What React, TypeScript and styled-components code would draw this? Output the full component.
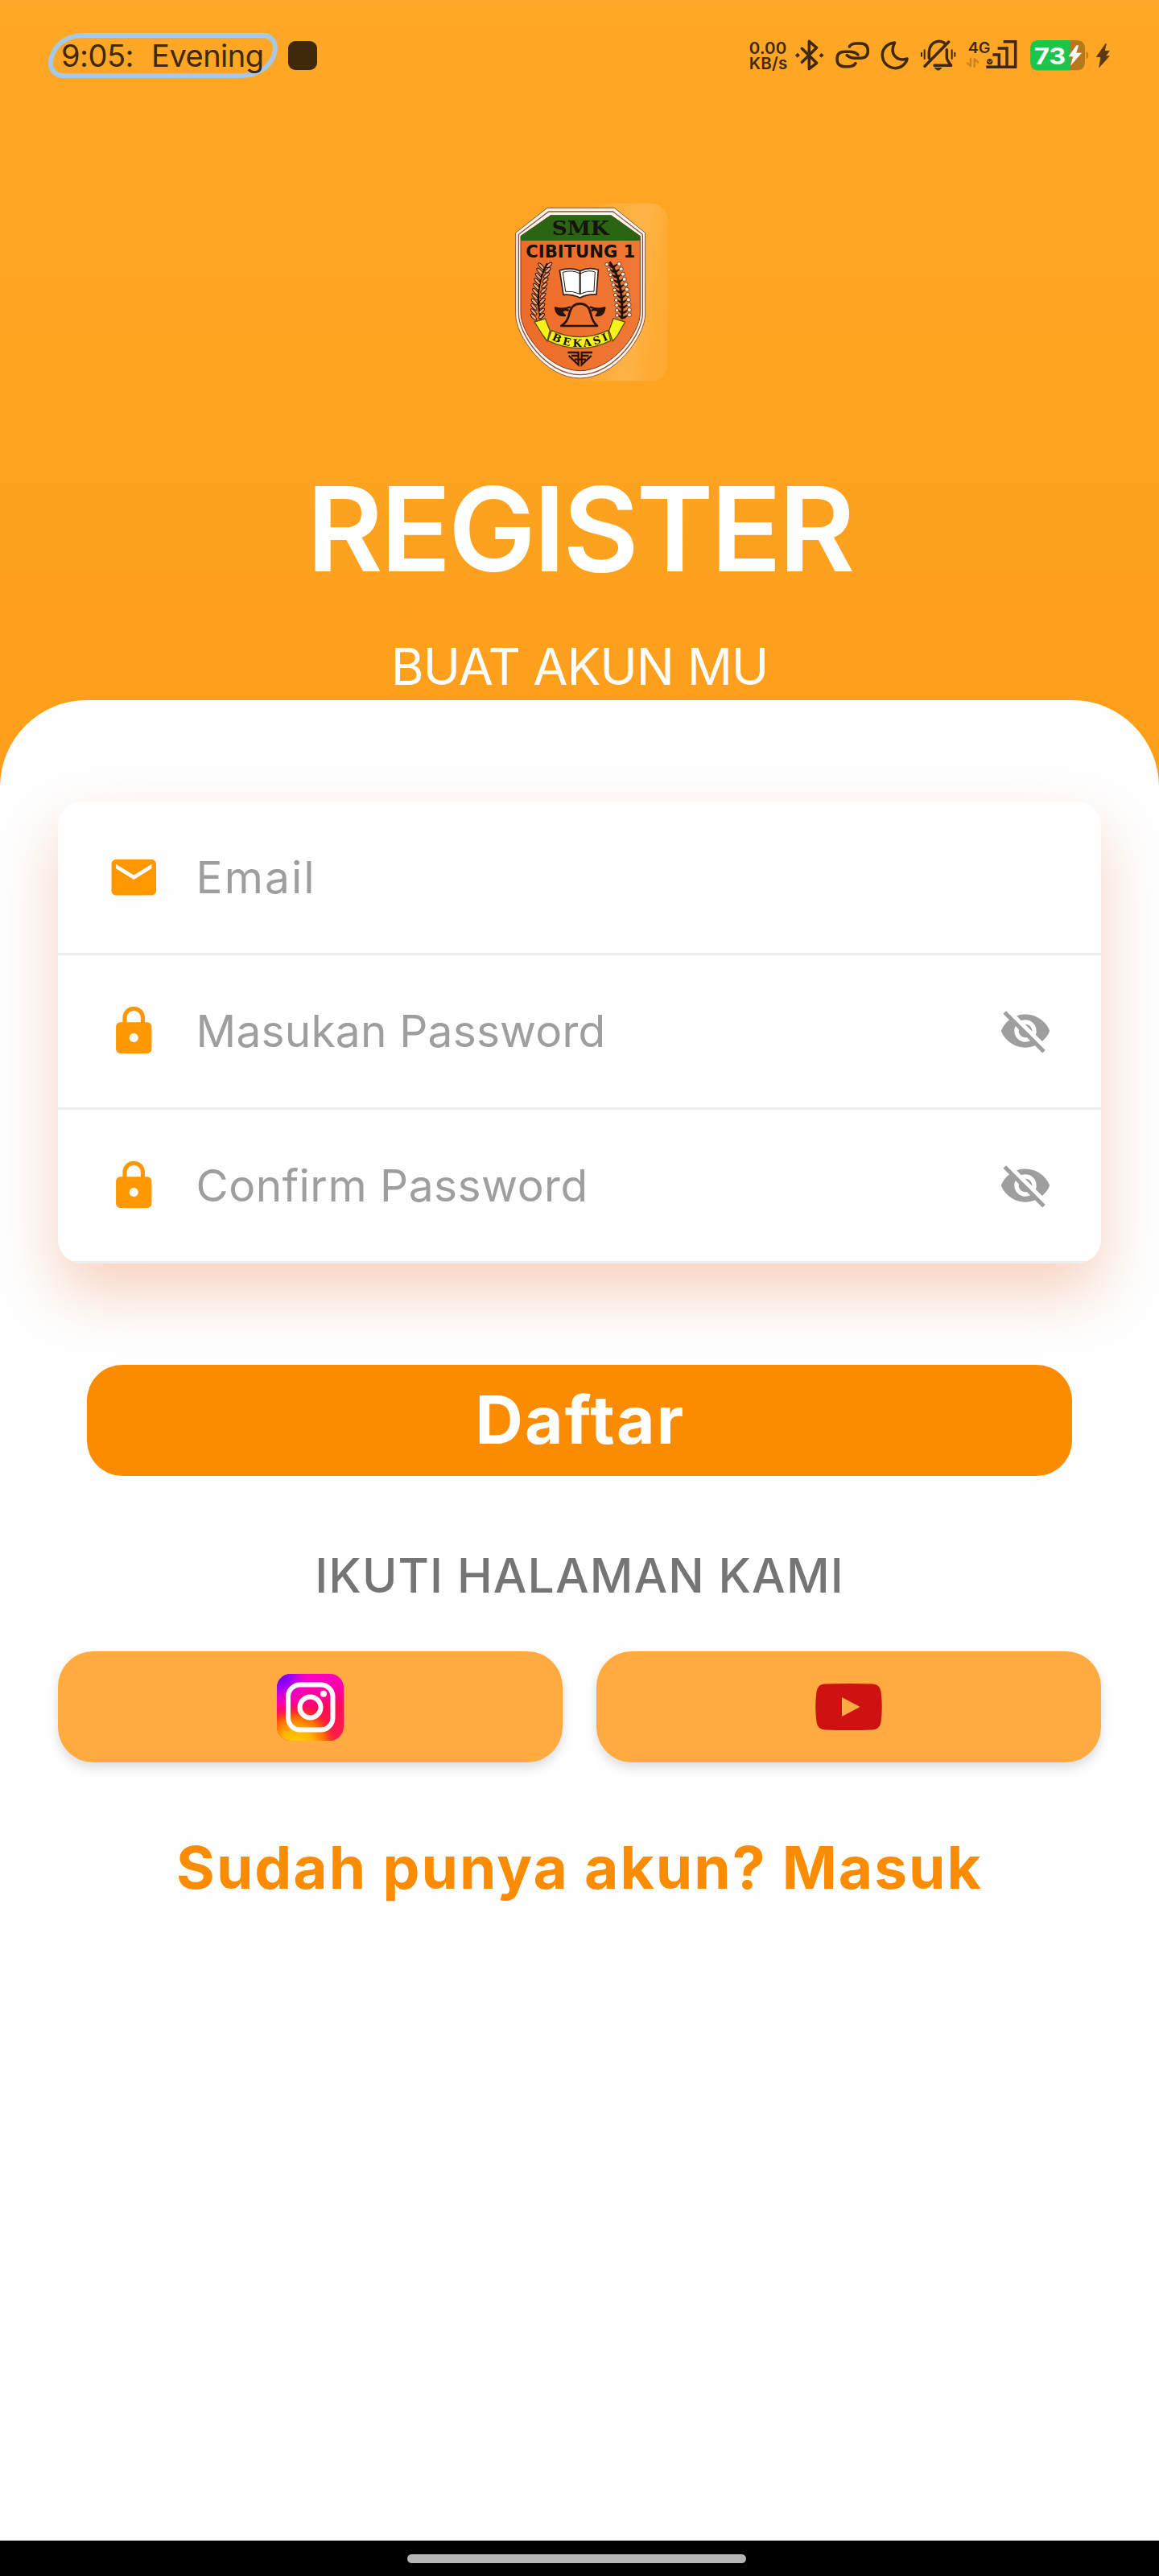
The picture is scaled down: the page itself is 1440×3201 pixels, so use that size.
import React, { useId } from 'react';
import styled, { createGlobalStyle } from 'styled-components';
import { MdEmail, MdLock, MdVisibilityOff } from 'react-icons/md';

const INK = '#40280a';

const GlobalStyle = createGlobalStyle`
  body { margin: 0; }
  *, *::before, *::after { box-sizing: border-box; }
  button { font: inherit; border: 0; padding: 0; cursor: pointer; }
  svg { display: block; flex: none; }
`;

const Screen = styled.main`
  width: 1440px;
  height: 3201px;
  display: flex;
  flex-direction: column;
  overflow: hidden;
  font-family: Inter, 'Open Sans', sans-serif;
  background: linear-gradient(to bottom, #ffa726, #fb8c00);
`;

/* ---------- status bar ---------- */

const StatusBar = styled.div`
  height: 138px;
  flex: none;
  display: flex;
  align-items: center;
  padding: 0 61px 0 60px;
  color: ${INK};
`;

const ClockPill = styled.div`
  width: 285px;
  height: 56px;
  display: flex;
  align-items: center;
  gap: 22px;
  padding-left: 10px;
  border: 6px solid #a5c9ea;
  border-radius: 42px 18px 44px 18px / 38px 18px 38px 18px;
  font-size: 38px;
  line-height: 44px;
  letter-spacing: -0.5px;
  white-space: nowrap;
`;

const RecordDot = styled.div`
  width: 36px;
  height: 36px;
  margin-left: 13px;
  border-radius: 9px;
  background: ${INK};
`;

const StatusIcons = styled.div`
  margin-left: auto;
  display: flex;
  align-items: center;
`;

const NetSpeed = styled.div`
  width: 57px;
  display: flex;
  flex-direction: column;
  font-size: 20.5px;
  font-weight: 600;
  line-height: 19.5px;
  letter-spacing: 0.2px;
`;

const StatusGlyph = styled.svg<{ $gap?: number }>`
  margin-right: ${(p) => p.$gap ?? 0}px;
  overflow: visible;
  fill: none;
  stroke: ${INK};
  stroke-width: 10.5;
  stroke-linecap: round;
  stroke-linejoin: round;
`;

type GlyphProps = { x: number; w: number; gap?: number; label: string; children: React.ReactNode };

/* Status glyphs share one 125-unit tall band, three units to a pixel. */
const Glyph = ({ x, w, gap, label, children }: GlyphProps) => (
  <StatusGlyph $gap={gap} width={w / 3} height={125 / 3} viewBox={`${x} 85 ${w} 125`} aria-label={label}>
    {children}
  </StatusGlyph>
);

/* ---------- header ---------- */

const Header = styled.header`
  height: 732px;
  flex: none;
  display: flex;
  flex-direction: column;
  align-items: center;
  color: #fff;
`;

const CrestBox = styled.div`
  margin-top: 102px;
  margin-left: 20px;
`;

const Title = styled.h1`
  margin: 97px 0 0;
  font-size: 145.5px;
  font-weight: 600;
  line-height: 160px;
  letter-spacing: -3.5px;
`;

const Subtitle = styled.p`
  margin: 59px 0 0;
  font-size: 62.6px;
  font-weight: 400;
  line-height: 64px;
  letter-spacing: -1.1px;
`;

/* ---------- form sheet ---------- */

const Sheet = styled.section`
  flex: 1;
  display: flex;
  flex-direction: column;
  align-items: center;
  padding: 126px 72px 0;
  border-radius: 108px 108px 0 0;
  background: #fefefe;
`;

const Card = styled.form`
  width: 100%;
  height: 574px;
  flex: none;
  display: flex;
  flex-direction: column;
  overflow: hidden;
  border-radius: 30px;
  background: #fefefe;
  box-shadow: 0 36px 75px rgba(225, 95, 27, 0.28);
`;

const Field = styled.label`
  flex: 1;
  display: flex;
  align-items: center;
  padding: 0 61px 0 61px;
  border-bottom: 3.6px solid #eeeeee;
  color: #ff9800;
`;

const Placeholder = styled.span<{ $tracking: number }>`
  flex: 1;
  margin-left: 44px;
  color: #9e9e9e;
  font-size: 55px;
  font-weight: 400;
  line-height: 66px;
  letter-spacing: ${(p) => p.$tracking}px;
`;

const Reveal = styled.span`
  color: #9e9e9e;
`;

const SubmitButton = styled.button`
  && {
    width: 1224px;
    height: 138px;
    flex: none;
    margin-top: 126px;
    padding-left: 2px;
    border-radius: 44px;
    background: #fb8c00;
    color: #fff;
    font-size: 82px;
    font-weight: 700;
    line-height: 90px;
    letter-spacing: 2.2px;
  }
`;

const FollowCaption = styled.p`
  margin: 94px 0 0;
  color: #757575;
  font-size: 58.8px;
  font-weight: 500;
  line-height: 60px;
  letter-spacing: 1.1px;
`;

const SocialRow = styled.div`
  width: 100%;
  margin-top: 64px;
  display: grid;
  grid-template-columns: 1fr 1fr;
  gap: 42px;
`;

const SocialButton = styled.button`
  height: 138px;
  display: flex;
  align-items: center;
  justify-content: center;
  border-radius: 44px;
  background: #ffab40;
  box-shadow: 0 8px 14px rgba(0, 0, 0, 0.1), 0 2px 12px rgba(0, 0, 0, 0.04);
`;

const LoginLink = styled.p`
  margin: 86px 0 0;
  color: #fb8c00;
  font-size: 73px;
  font-weight: 650;
  line-height: 90px;
  letter-spacing: 2px;
  white-space: nowrap;
`;

/* ---------- system navigation ---------- */

const NavBar = styled.div`
  height: 44px;
  flex: none;
  padding: 17px 0 0 506px;
  background: #000;
`;

const NavHandle = styled.div`
  width: 421px;
  height: 11px;
  border-radius: 6px;
  background: #b4b4b4;
`;

const leafRows = Array.from({ length: 11 }, (_, i) => i);

const leftStem = (i: number) => ({ x: 146 + Math.pow((10 - i) / 10, 2) * 28, y: 272 + i * 19 });
const rightStem = (i: number) => ({ x: 462 - Math.pow((10 - i) / 10, 2) * 38, y: 266 + i * 19 });

function Crest() {
  const id = useId();
  return (
    <svg width={220} height={240} viewBox="0 0 660 720" aria-label="SMK Cibitung 1 Bekasi">
      <defs>
        <linearGradient id={`${id}glow`} x1="0" x2="1" y1="0" y2="0.12">
          <stop offset="0.45" stopColor="#fff" stopOpacity="0" />
          <stop offset="0.85" stopColor="#fff" stopOpacity="0.17" />
          <stop offset="1" stopColor="#fff" stopOpacity="0.08" />
        </linearGradient>
        <linearGradient id={`${id}body`} x1="0" x2="1" y1="0" y2="0">
          <stop offset="0" stopColor="#ee6c2a" />
          <stop offset="1" stopColor="#ef7834" />
        </linearGradient>
        <path id={`${id}arc`} d="M190 543 Q302 605 418 540" />
      </defs>
      <rect x="20" y="38" width="608" height="662" rx="60" fill={`url(#${id}glow)`} />
      <path d="M180 55H430L545 148V452C545 530 434 690 302 690C170 690 62 530 62 452V148Z" fill="#fff6ee" stroke="#8b5240" strokeWidth="3" />
      <path d="M185 69H425L535 154V450C535 525 428 677 302 677C176 677 73 525 73 450V154Z" fill="none" stroke="#8b5240" strokeWidth="4" />
      <path d="M192 83H418L526 160V448C526 520 422 662 302 662C182 662 81 520 81 448V160Z" fill={`url(#${id}body)`} stroke="#7c3a22" strokeWidth="3" />
      <path d="M192 83H418L526 160V177H81V160Z" fill="#2b6412" />
      <g fill="#15130c" fontWeight="700">
        <text x="197" y="155" fontFamily="'DejaVu Serif', serif" fontSize="70" textLength="213" lengthAdjust="spacingAndGlyphs">SMK</text>
        <text x="100" y="239" fontFamily="'DejaVu Sans', sans-serif" fontSize="61" textLength="408" lengthAdjust="spacingAndGlyphs">CIBITUNG 1</text>
      </g>

      {/* rice ear on the left, cotton branch on the right */}
      <path d="M180 262C140 330 140 400 156 470" fill="none" stroke="#1c130d" strokeWidth="7" />
      {leafRows.map((i) => {
        const { x, y } = leftStem(i);
        return (
          <g key={i} stroke="#1c130d" strokeWidth="3">
            <ellipse cx={x - 17} cy={y} rx="15" ry="5.5" transform={`rotate(48 ${x - 17} ${y})`} fill="#f4a57c" />
            <ellipse cx={x + 13} cy={y - 4} rx="13" ry="5.5" transform={`rotate(-42 ${x + 13} ${y - 4})`} fill="#f4a57c" />
          </g>
        );
      })}
      <path d="M412 256Q466 330 458 470" fill="none" stroke="#1c130d" strokeWidth="9" />
      {leafRows.map((i) => {
        const { x, y } = rightStem(i);
        return (
          <g key={i}>
            <path d={`M${x - 20} ${y - 2}L${x} ${y + 6}L${x + 22} ${y - 4}L${x + 7} ${y + 11}H${x - 7}Z`} fill="#1c130d" stroke="#1c130d" strokeWidth="2" />
            <circle cx={x - 22} cy={y} r="6.5" fill="#ffe3d0" stroke="#1c130d" strokeWidth="2" />
            <circle cx={x + 24} cy={y - 2} r="7.5" fill="#ffe3d0" stroke="#1c130d" strokeWidth="2" />
          </g>
        );
      })}

      {/* open book */}
      <path d="M226 288Q268 274 302 290Q336 274 370 286L363 378Q330 376 302 390Q270 376 240 379Z" fill="#fff" stroke="#3a1d12" strokeWidth="5" strokeLinejoin="round" />
      <path d="M238 295Q272 284 302 300Q334 284 358 294L354 366Q328 364 302 376Q274 364 248 367Z" fill="#fff" stroke="#1c130d" strokeWidth="3" />
      <path d="M302 292V376" stroke="#1c130d" strokeWidth="6" />

      {/* anvil and horns */}
      <path d="M232 495Q256 480 262 450Q270 412 302 412Q334 412 342 450Q348 480 366 495Z" fill="none" stroke="#2a130b" strokeWidth="8" strokeLinejoin="round" />
      <path d="M266 424Q238 436 210 427Q214 460 246 456Q232 444 236 438Q250 432 260 438M338 424Q366 436 394 427Q390 460 362 456Q374 444 368 438Q354 432 344 438" fill="none" stroke="#2a130b" strokeWidth="7" strokeLinejoin="round" />
      <path d="M210 427L236 434L244 456Q216 456 210 427ZM394 427L368 434L362 456Q388 456 394 427Z" fill="#2a130b" />

      {/* ribbon */}
      <path d="M132 480L172 468L190 512L180 552L162 528Z M470 480L426 467L410 512L424 552L442 530Z" fill="#f5f21a" stroke="#5b4c10" strokeWidth="4" strokeLinejoin="round" />
      <path d="M196 512Q302 560 406 512L416 550Q302 606 182 550Z" fill="#f5f21a" stroke="#5b4c10" strokeWidth="4" strokeLinejoin="round" />
      <text fill="#15130c" fontFamily="'DejaVu Serif', serif" fontWeight="700" fontSize="39">
        <textPath href={`#${id}arc`} startOffset="6" textLength="222" lengthAdjust="spacing">BEKASI</textPath>
      </text>
      <path d="M256 594H296V640L260 606M348 594H308V640L344 606M270 606H296M308 606H334M282 620H324" fill="none" stroke="#2a130b" strokeWidth="7" />
    </svg>
  );
}

function InstagramLogo() {
  const id = useId();
  return (
    <svg width={83} height={83} viewBox="0 0 83 83" aria-label="Instagram">
      <defs>
        <linearGradient id={`${id}base`} x1="0.3" y1="0" x2="0.5" y2="1">
          <stop offset="0" stopColor="#fc00d0" />
          <stop offset="0.35" stopColor="#ff00a0" />
          <stop offset="0.6" stopColor="#ff0f50" />
          <stop offset="1" stopColor="#ff1a50" />
        </linearGradient>
        <radialGradient id={`${id}violet`} cx="0.02" cy="0" r="0.5">
          <stop offset="0" stopColor="#5a00ff" />
          <stop offset="0.4" stopColor="#9a00f5" />
          <stop offset="1" stopColor="#f000d8" stopOpacity="0" />
        </radialGradient>
        <radialGradient id={`${id}gold`} cx="0.3" cy="1.08" r="0.62">
          <stop offset="0" stopColor="#ffd000" />
          <stop offset="0.4" stopColor="#ffb400" />
          <stop offset="0.7" stopColor="#ff6a00" />
          <stop offset="1" stopColor="#ff2020" stopOpacity="0" />
        </radialGradient>
      </defs>
      <rect width="83" height="83" rx="17" fill={`url(#${id}base)`} />
      <rect width="83" height="83" rx="17" fill={`url(#${id}violet)`} />
      <rect width="83" height="83" rx="17" fill={`url(#${id}gold)`} />
      <g fill="none" stroke="#fff" strokeWidth="6">
        <rect x="14" y="13.5" width="55.5" height="56" rx="15" />
        <circle cx="41.5" cy="41.5" r="13" />
      </g>
      <circle cx="58" cy="24.8" r="4" fill="#fff" />
    </svg>
  );
}

const YoutubeLogo = () => (
  <svg width={83} height={58} viewBox="0 0 83 58" aria-label="YouTube">
    <path
      fill="#cd1211"
      fillRule="evenodd"
      d="M12 .6Q41.500 -.6 71 .6Q80 1 81.500 10Q84 29 81.500 48Q80 57 71 57.400Q41.500 58.600 12 57.400Q3 57 1.500 48Q-1 29 1.500 10Q3 1 12 .6ZM33 17V41L55.500 29Z"
    />
  </svg>
);

type FieldSpec = { icon: React.ReactNode; label: string; tracking: number; secret: boolean };

const fields: FieldSpec[] = [
  { icon: <MdEmail size={66.5} />, label: 'Email', tracking: 2.1, secret: false },
  { icon: <MdLock size={66.5} />, label: 'Masukan Password', tracking: 0.2, secret: true },
  { icon: <MdLock size={66.5} />, label: 'Confirm Password', tracking: 0.5, secret: true },
];

export default function App() {
  return (
    <Screen>
      <GlobalStyle />
      <StatusBar>
        <ClockPill>
          <span>9:05:</span>
          <span>Evening</span>
        </ClockPill>
        <RecordDot />
        <StatusIcons>
          <NetSpeed>
            <span>0.00</span>
            <span>KB/s</span>
          </NetSpeed>
          <Glyph x={265} w={110} gap={13.3} label="Bluetooth">
            <path d="M290 122L345 176L317 198V95L345 119L290 173" />
            <path d="M267 147L274 140L281 147L274 154ZM356 147L363 140L370 147L363 154Z" fill={INK} strokeWidth="3" />
          </Glyph>
          <Glyph x={415} w={128} gap={14} label="Link">
            <path d="M467 115Q474 103 492 103H508Q536 103 536 131Q536 158 508 158H488Q470 158 458 147" />
            <path d="M490 177Q483 189 465 189H449Q421 189 421 161Q421 134 449 134H469Q487 134 499 145" />
          </Glyph>
          <Glyph x={585} w={105} gap={14} label="Do not disturb">
            <path d="M638 100C603 104 590 130 592 150C596 192 642 206 668 185C678 177 683 168 684 160C646 172 616 142 638 100Z" />
          </Glyph>
          <Glyph x={732} w={135} gap={12.7} label="Vibrate">
            <path d="M839 97L750 188M766 158V135C768 90 814 88 825 104M832 126V158Q834 166 848 185H786" />
            <path d="M787 194H813Q808 203 800 203Q792 203 787 194Z" fill={INK} strokeWidth="2" />
            <path d="M738 138V150M749 128V160M851 128V160M862 138V150" strokeWidth="6" />
          </Glyph>
          <Glyph x={905} w={188} gap={16.3} label="4G signal">
            <text x="910" y="138" fill={INK} stroke="none" fontFamily="Inter, sans-serif" fontWeight="600" fontSize="55" textLength="83" lengthAdjust="spacingAndGlyphs">4G</text>
            <g strokeLinecap="butt" strokeLinejoin="miter">
              <path d="M1042 96H1087V186M1021 121H1055V186M1002 145H1026V186M978 191H1092" />
            </g>
            <circle cx="991" cy="171" r="10" fill={INK} strokeWidth="2" />
            <path d="M985 168L992 174L997 168" stroke="#ffa625" strokeWidth="3" />
            <path d="M920 159V187L908 176M934 189V161L948 174" stroke="#c98420" strokeWidth="7" />
          </Glyph>
          <Glyph x={1142} w={222} gap={7} label="Battery 73 percent">
            <path d="M1175 91H1314Q1346 91 1346 123V171Q1346 203 1314 203H1175Q1143 203 1143 171V123Q1143 91 1175 91Z" fill="#b67a1d" stroke="none" />
            <path d="M1175 91H1292V203H1175Q1143 203 1143 171V123Q1143 91 1175 91Z" fill="#18c64b" stroke="none" />
            <path d="M1353 136Q1363 147 1353 158Z" fill="#b67a1d" stroke="#b67a1d" strokeWidth="3" />
            <text x="1157" y="180" fill="#fff" stroke="none" fontFamily="Inter, sans-serif" fontWeight="700" fontSize="86" textLength="118" lengthAdjust="spacingAndGlyphs">73</text>
            <path d="M1314 112L1286 151H1303L1294 183L1332 139H1312L1321 112Z" fill="#fff" stroke="#fff" strokeWidth="2" />
          </Glyph>
          <Glyph x={1386} w={54} label="Charging">
            <path d="M1424 104L1390 153H1406L1400 192L1438 150H1424L1438 131H1420L1426 106Z" fill="#5a380c" stroke="#5a380c" strokeWidth="2" />
          </Glyph>
        </StatusIcons>
      </StatusBar>

      <Header>
        <CrestBox>
          <Crest />
        </CrestBox>
        <Title>REGISTER</Title>
        <Subtitle>BUAT AKUN MU</Subtitle>
      </Header>

      <Sheet>
        <Card>
          {fields.map((field) => (
            <Field key={field.label}>
              {field.icon}
              <Placeholder $tracking={field.tracking}>{field.label}</Placeholder>
              {field.secret && (
                <Reveal>
                  <MdVisibilityOff size={66} />
                </Reveal>
              )}
            </Field>
          ))}
        </Card>
        <SubmitButton type="button">Daftar</SubmitButton>
        <FollowCaption>IKUTI HALAMAN KAMI</FollowCaption>
        <SocialRow>
          <SocialButton type="button">
            <InstagramLogo />
          </SocialButton>
          <SocialButton type="button">
            <YoutubeLogo />
          </SocialButton>
        </SocialRow>
        <LoginLink>Sudah punya akun? Masuk</LoginLink>
      </Sheet>

      <NavBar>
        <NavHandle />
      </NavBar>
    </Screen>
  );
}
